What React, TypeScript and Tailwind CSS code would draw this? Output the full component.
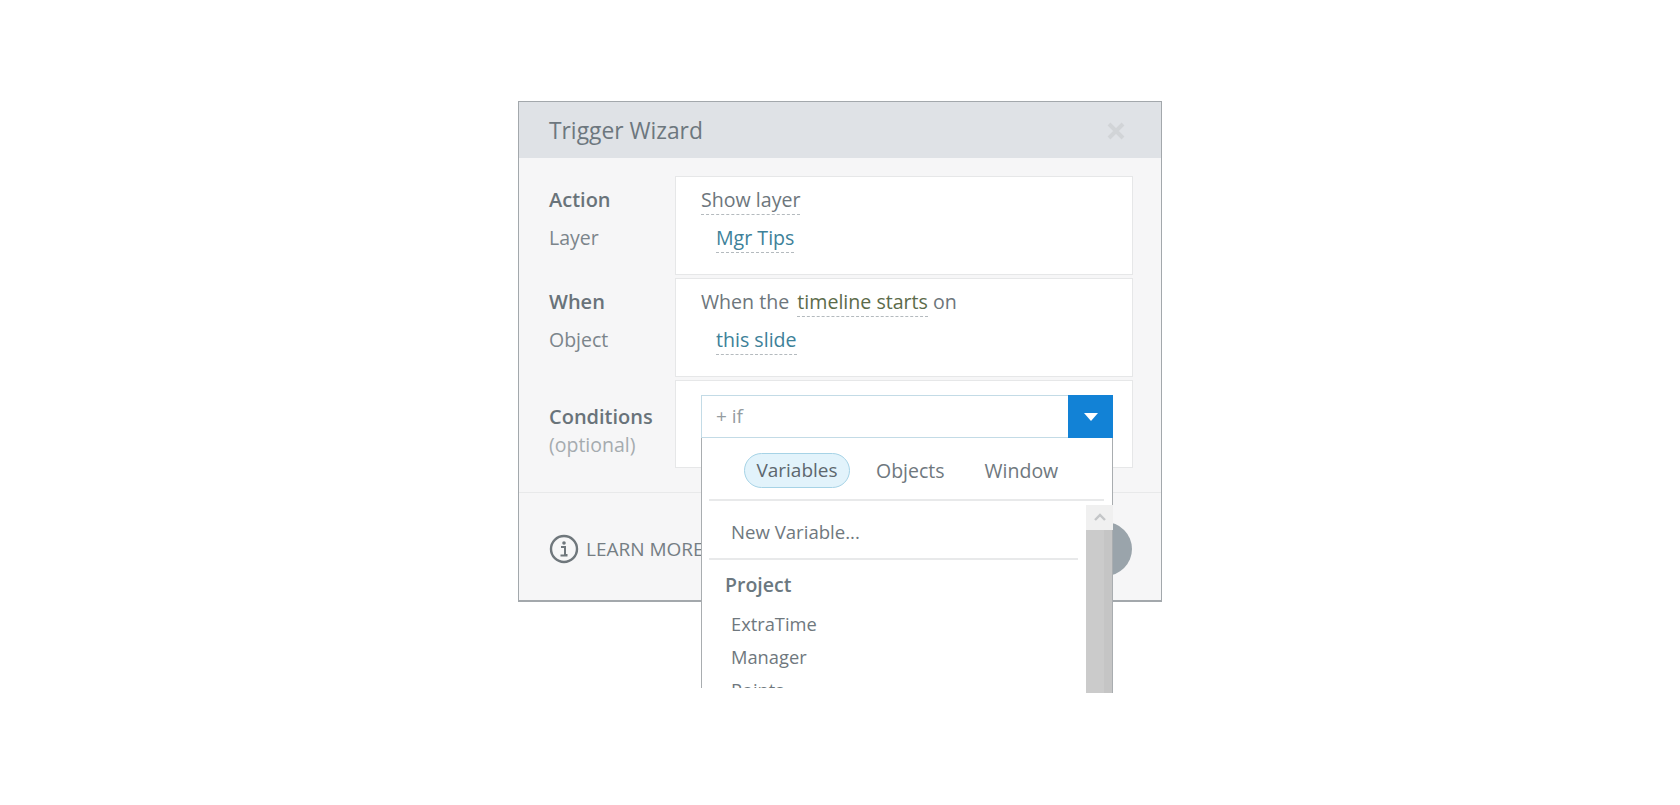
import React from "react";

const font = { fontFamily: '"Open Sans", "Noto Sans", sans-serif' };

function Dashed({ children, className = "" }: { children: React.ReactNode; className?: string }) {
  return <span className={`border-b border-dashed border-[#b4babe] pb-px ${className}`}>{children}</span>;
}

function Row({ title, sub, card }: { title: string; sub: string; card: React.ReactNode }) {
  return (
    <div className="flex h-[99px]">
      <div className="w-[156px] shrink-0 pl-[30px] pt-[8px]">
        <div className="h-[38px] text-[20px] leading-[32px] font-semibold text-[#69737a]">{title}</div>
        <div className="text-[19.5px] leading-[32px] text-[#7c858b]">{sub}</div>
      </div>
      <div className="w-[458px] border border-[#e6e7e8] bg-white pl-[25px] pt-[7px]">{card}</div>
    </div>
  );
}

export default function App() {
  return (
    <div className="h-[805px] w-full overflow-hidden bg-white pl-[518px] pt-[101px]" style={font}>
      <div className="relative h-[501px] w-[644px] border border-b-2 border-[#a3a8ac] bg-[#f6f6f7]">
        <div className="flex h-[56px] items-center justify-between bg-[#dfe2e6] pl-[30px] pr-[35px] pt-[2px]">
          <span className="text-[22.8px] text-[#6d777e]">Trigger Wizard</span>
          <svg width="20" height="20" viewBox="0 0 20 20" className="text-[#d1d4d7]">
            <path d="M3 3 L17 17 M17 3 L3 17" stroke="currentColor" strokeWidth="4" />
          </svg>
        </div>

        <div className="flex flex-col gap-[3px] pt-[18px]">
          <Row
            title="Action"
            sub="Layer"
            card={
              <div className="text-[19.6px] leading-[32px]">
                <div className="h-[38px] text-[#6d767c]"><Dashed>Show layer</Dashed></div>
                <div className="pl-[15px] text-[#3d8199]"><Dashed>Mgr Tips</Dashed></div>
              </div>
            }
          />
          <Row
            title="When"
            sub="Object"
            card={
              <div className="text-[19.6px] leading-[32px]">
                <div className="h-[38px] text-[#6d767c]">
                  When the <Dashed className="ml-[3px] text-[#5c6b4a]">timeline starts</Dashed> on
                </div>
                <div className="pl-[15px] text-[#3d8199]"><Dashed>this slide</Dashed></div>
              </div>
            }
          />
          <div className="flex h-[88px]">
            <div className="w-[156px] shrink-0 pl-[30px] pt-[21px]">
              <div className="h-[29px] text-[20px] leading-[32px] font-semibold text-[#69737a]">Conditions</div>
              <div className="text-[19.5px] leading-[30px] text-[#a5abaf]">(optional)</div>
            </div>
            <div className="w-[458px] border border-[#e6e7e8] bg-white pl-[25px] pt-[14px]">
              <div className="flex h-[43px] w-[412px] items-center border border-[#c3dbe6] bg-white pl-[14px] text-[19px] text-[#959ca1]">
                + if
              </div>
            </div>
          </div>
        </div>

        <div className="mt-[24px] flex h-[112px] items-center justify-between border-t border-[#e8e9ea] pl-[30px] pr-[29px] pt-[1px]">
          <div className="flex items-center gap-[7px]">
            <svg width="30" height="30" viewBox="0 0 30 30" className="text-[#6f777c]">
              <circle cx="15" cy="15" r="13" fill="none" stroke="currentColor" strokeWidth="2.4" />
              <circle cx="15" cy="9" r="1.8" fill="currentColor" />
              <path d="M12 13 H16 V21 H18.5 M11.5 21.5 H18.5" fill="none" stroke="currentColor" strokeWidth="2" />
            </svg>
            <span className="text-[19px] text-[#757e84]">LEARN MORE</span>
          </div>
          <div className="h-[54px] w-[54px] rounded-full bg-[#9aa4ab]" />
        </div>

        {/* Open drop-down, lying over the dialog */}
        <div className="absolute left-[183px] top-[293px] w-[411px]">
          <div className="flex h-[43px] justify-end">
            <div className="flex w-[45px] items-center justify-center bg-[#1282d6]">
              <svg width="14" height="8" viewBox="0 0 14 8"><path d="M0 0 H14 L7 8 Z" fill="#fff" /></svg>
            </div>
          </div>
          <div className="relative -ml-px h-[250px] overflow-hidden border-l border-r border-[#a9adb0] bg-white">
            <div className="flex h-[61px] items-start pl-[42px] pt-[15px] text-[19.5px] text-[#6f787e]">
              <span className="flex h-[35px] w-[106px] items-center justify-center rounded-full border border-[#a6d3e6] bg-[#e2f3fb] text-[19px] text-[#5d676e]">
                Variables
              </span>
              <span className="ml-[26px] flex h-[35px] items-center">Objects</span>
              <span className="ml-[40px] flex h-[35px] items-center">Window</span>
            </div>
            <div className="ml-[7px] h-[2px] w-[395px] bg-[#e8e9ea]" />
            <div className="pl-[29px] pt-[15px] text-[18.6px] leading-[32px] text-[#6f787e]">New Variable...</div>
            <div className="ml-[7px] mt-[10px] h-[2px] w-[369px] bg-[#e8e9ea]" />
            <div className="pl-[23px] pt-[9px] text-[19.5px] leading-[32px] font-semibold text-[#6b7880]">Project</div>
            <div className="pl-[29px] pt-[6px] text-[18.3px] leading-[33px] text-[#6f787e]">
              <div>ExtraTime</div>
              <div>Manager</div>
              <div>Points</div>
            </div>
          </div>
          <div className="absolute right-0 top-[110px] flex h-[188px] w-[27px] flex-col">
            <div className="flex h-[25px] items-center justify-center bg-[#f0f0f0]">
              <svg width="14" height="9" viewBox="0 0 14 9" className="text-[#c4c6c8]">
                <path d="M2 7 L7 2 L12 7" fill="none" stroke="currentColor" strokeWidth="2.4" />
              </svg>
            </div>
            <div className="flex-1 border-r border-[#a9adb0] bg-[linear-gradient(to_right,#cbcbcb_70%,#c5c5c5_70%)]" />
          </div>
        </div>
      </div>
    </div>
  );
}
